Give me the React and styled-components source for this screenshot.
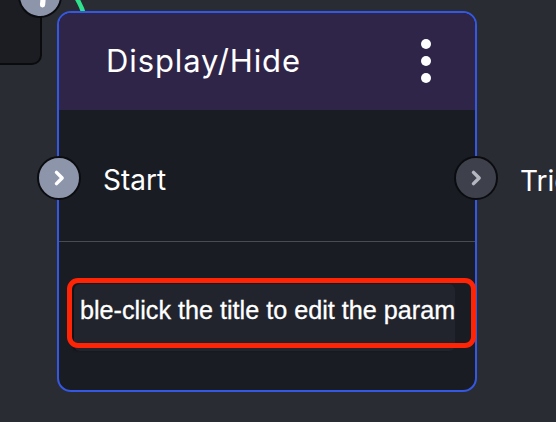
import React from "react";
import styled, { createGlobalStyle } from "styled-components";

const Global = createGlobalStyle`
  html, body { margin: 0; padding: 0; }
  body {
    width: 556px; height: 422px; overflow: hidden;
    background: #2a2c34;
    font-family: Inter, "Liberation Sans", Arial, sans-serif;
  }
  * { box-sizing: border-box; }
`;

const Canvas = styled.div`
  position: relative;
  width: 556px;
  height: 422px;
  overflow: hidden;
  background: #2a2c34;
`;

const PrevNode = styled.div`
  position: absolute;
  left: -12px;
  top: -12px;
  width: 54px;
  height: 77px;
  background: #1b1d23;
  border: 2px solid #0a0b0d;
  border-radius: 10px;
`;

const Edge = styled.svg`
  position: absolute;
  left: 0;
  top: 0;
  overflow: visible;
`;

const Handle = styled.div`
  position: absolute;
  width: 44px;
  height: 44px;
  border-radius: 50%;
  border: 2.5px solid #0b0c10;
  background: ${(p) => (p.$active ? "#8d95aa" : "#3e414b")};
  color: ${(p) => (p.$active ? "#ffffff" : "#b4b7bf")};
  display: flex;
  align-items: center;
  justify-content: center;
  transform: translate(-50%, -50%) ${(p) => (p.$rotate ? `rotate(${p.$rotate}deg)` : "")};
  z-index: 3;
`;

const Node = styled.div`
  position: absolute;
  left: 57px;
  top: 11px;
  width: 420px;
  height: 381px;
  border: 2px solid #3558e4;
  border-radius: 14px;
  background: #1a1c23;
  display: flex;
  flex-direction: column;
`;

const Header = styled.div`
  height: 97px;
  flex: none;
  background: #2f2548;
  border-radius: 12px 12px 0 0;
  display: flex;
  align-items: center;
  justify-content: space-between;
  padding: 0 44px 0 47px;
`;

const Title = styled.div`
  color: #ffffff;
  font-size: 31px;
  letter-spacing: 0.9px;
  font-weight: 400;
  padding-bottom: 3px;
`;

const Dots = styled.div`
  display: flex;
  flex-direction: column;
  gap: 7px;
  padding-bottom: 2px;
`;

const Dot = styled.span`
  width: 10px;
  height: 10px;
  border-radius: 50%;
  background: #ffffff;
`;

const PortRow = styled.div`
  position: relative;
  height: 132px;
  flex: none;
  display: flex;
  align-items: center;
  padding-left: 44px;
  border-bottom: 1px solid #4a4c55;
`;

const PortLabel = styled.span`
  color: #ffffff;
  font-size: 28px;
  padding-top: 8px;
`;

const Footer = styled.div`
  position: relative;
  flex: 1;
  padding: 42px 20px 0 15px;
`;

const InputBox = styled.div`
  width: 381px;
  height: 67px;
  background: #21242c;
  border-radius: 6px;
  box-shadow: -2px 0 2px rgba(0, 0, 0, 0.35);
  padding: 12px 0 0 6px;
  overflow: hidden;
  white-space: nowrap;
  color: #ffffff;
  font-family: "Liberation Sans", Arial, sans-serif;
  font-size: 25.2px;
  -webkit-text-stroke: 0.3px #ffffff;
`;

const Highlight = styled.div`
  position: absolute;
  left: 8px;
  top: 36px;
  width: 409px;
  height: 70px;
  border: 5.5px solid #ff2406;
  border-radius: 11px;
  pointer-events: none;
`;

const SideLabel = styled.span`
  position: absolute;
  left: 520px;
  top: 181px;
  transform: translateY(-50%);
  color: #ffffff;
  font-size: 28px;
  white-space: nowrap;
`;

const Chevron = ({ size = 20 }) => (
  <svg width={size} height={size} viewBox="0 0 16 16" fill="none">
    <path d="M6 3.5 L10.5 8 L6 12.5" stroke="currentColor" strokeWidth="2.8" strokeLinecap="round" strokeLinejoin="round" />
  </svg>
);

export default function App() {
  return (
    <>
      <Global />
      <Canvas>
        <PrevNode />
        <Handle $active style={{ left: 40, top: -4 }} $rotate={-40}>
          <Chevron size={30} />
        </Handle>
        <Edge width="556" height="422">
          <path d="M76 -3 C 79 2, 82 7, 84 15" stroke="#2fe38d" strokeWidth="4.5" fill="none" />
        </Edge>
        <Node>
          <Header>
            <Title>Display/Hide</Title>
            <Dots>
              <Dot />
              <Dot />
              <Dot />
            </Dots>
          </Header>
          <PortRow>
            <Handle $active style={{ left: 0, top: "52%" }}>
              <Chevron />
            </Handle>
            <PortLabel>Start</PortLabel>
            <Handle style={{ left: 417, top: "52%" }}>
              <Chevron />
            </Handle>
          </PortRow>
          <Footer>
            <InputBox>ble-click the title to edit the param</InputBox>
            <Highlight />
          </Footer>
        </Node>
        <SideLabel>Trig</SideLabel>
      </Canvas>
    </>
  );
}
